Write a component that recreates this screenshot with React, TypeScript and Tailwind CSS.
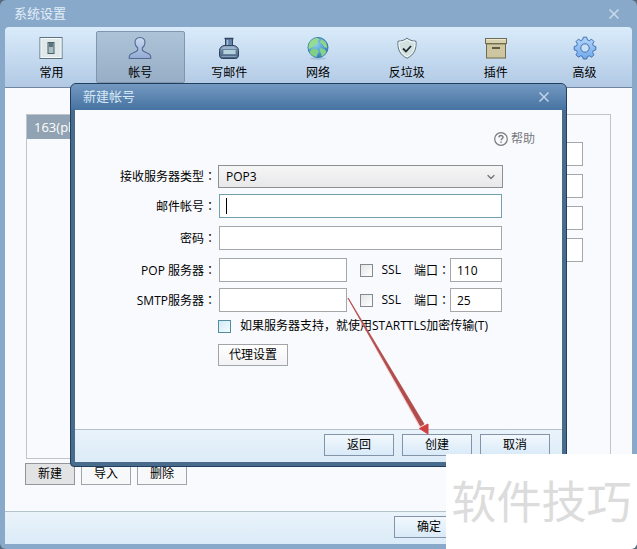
import React from 'react';
import { ChevronDown, X } from 'lucide-react';

const FONT = "font-['Open_Sans','Noto_Sans_CJK_SC',sans-serif]";

function GeneralIcon() {
  return (
    <svg width="24" height="24" viewBox="0 0 24 24" fill="none">
      <rect x="1" y="1.5" width="22" height="21" fill="#dfe9e9" stroke="#5d7180" />
      <rect x="2" y="2.5" width="20" height="19" stroke="#f6fafa" />
      <rect x="9" y="6.5" width="6" height="11" fill="#a9bfc4" stroke="#4b5f69" />
      <rect x="10" y="7" width="4" height="4" fill="#5d727c" />
    </svg>
  );
}

function AccountIcon() {
  return (
    <svg width="24" height="24" viewBox="0 0 24 24" fill="none">
      <defs>
        <linearGradient id="person" x1="0" y1="0" x2="0" y2="1">
          <stop offset="0" stopColor="#c9d9f3" />
          <stop offset="1" stopColor="#92abd4" />
        </linearGradient>
      </defs>
      <path
        d="M12 1.5c-3.200 0-5 2-5 4.800 0 2.600 1.200 4.400 2.700 5.700v2c-.4 1-1.800 1.800-3.600 2.400-3.100 1-4.800 2.200-4.800 4.200v1.900h21.400v-1.900c0-2-1.700-3.200-4.800-4.200-1.800-.6-3.200-1.400-3.600-2.400v-2c1.500-1.300 2.700-3.100 2.700-5.700 0-2.800-1.800-4.800-5-4.800z"
        fill="url(#person)"
        stroke="#53698f"
        strokeWidth="1.1"
      />
    </svg>
  );
}

function ComposeIcon() {
  return (
    <svg width="24" height="24" viewBox="0 0 24 24" fill="none">
      <defs>
        <linearGradient id="ink" x1="0" y1="0" x2="0" y2="1">
          <stop offset="0" stopColor="#7e9bbb" />
          <stop offset="1" stopColor="#46617f" />
        </linearGradient>
      </defs>
      <path d="M7 9.500h10c2.500.5 4.500 2.500 4.500 5v4.500c0 2-1 3.500-2.800 3.500H5.300c-1.800 0-2.800-1.500-2.800-3.500v-4.500c0-2.500 2-4.500 4.500-5z" fill="url(#ink)" stroke="#30435c" />
      <rect x="8.500" y="2.500" width="7" height="7" fill="#6483a8" stroke="#33465f" />
      <path d="M7.500 2.500h9" stroke="#33465f" strokeWidth="1.500" />
      <path d="M10.500 4v5" stroke="#a4bdd8" strokeWidth="1.500" />
      <path d="M4 13.500c.5-1.500 1.800-2.500 3.500-3h9c1.700.5 3 1.500 3.500 3z" fill="#9bb5cf" />
      <rect x="6" y="13.500" width="13" height="5" fill="#b4d0da" stroke="#56738f" strokeWidth=".7" />
      <path d="M4.500 20.500h15" stroke="#7f9dbc" />
    </svg>
  );
}

function NetworkIcon() {
  return (
    <svg width="24" height="24" viewBox="0 0 24 24" fill="none">
      <defs>
        <radialGradient id="sea" cx=".4" cy=".35" r=".7">
          <stop offset="0" stopColor="#8ad0ec" />
          <stop offset="1" stopColor="#3277bd" />
        </radialGradient>
      </defs>
      <ellipse cx="12" cy="22.500" rx="8" ry="1.200" fill="#84a3c6" opacity=".5" />
      <circle cx="12" cy="11.500" r="10" fill="url(#sea)" stroke="#3b7ba8" />
      <path d="M4 6c2-2.500 4.500-4 7.500-4l2 1.500-2 1.500.5 2-3 1.500-1 2.500-2.500.500-2.500 2C2.200 11 2.600 8 4 6z" fill="#94dc8e" />
      <path d="M15 3l4 2.500c1.500 2 2.300 4.200 2 6.500l-3-1-1.500-3-2.500-1z" fill="#8ed68c" />
      <path d="M6 12.500l4.500.5 2.500 2.500-1.500 2.500-1 3C7 20.500 4.500 18.500 3.500 16z" fill="#7fcf86" />
      <path d="M14.500 12l3.500 1 2.500 2.500c-1 2.500-2.700 4-5 5l-.5-3-1.500-2.500z" fill="#84d18b" />
    </svg>
  );
}

function SpamIcon() {
  return (
    <svg width="24" height="24" viewBox="0 0 24 24" fill="none">
      <path d="M12 2c2 2 5 3 9 3.200.6 7.500-1.500 13.500-9 17-7.500-3.500-9.600-9.500-9-17C7 5 10 4 12 2z" fill="#d3e0e0" stroke="#5f7480" />
      <path d="M12 3.600c2 1.600 4.500 2.400 7.900 2.600.3 6.400-1.800 11.500-7.900 14.700C5.900 17.700 3.800 12.600 4.100 6.200 7.500 6 10 5.200 12 3.600z" stroke="#f6fbfb" />
      <path d="M8 12.500l3 3 5-5.500" stroke="#1f2b2f" strokeWidth="1.800" />
    </svg>
  );
}

function PluginIcon() {
  return (
    <svg width="24" height="24" viewBox="0 0 24 24" fill="none">
      <rect x="2.500" y="7.500" width="19" height="14.500" fill="#cdc6a1" stroke="#6f6a50" />
      <rect x="1.500" y="2.500" width="21" height="5" fill="#d8d1ad" stroke="#6f6a50" />
      <path d="M2 3.500h20" stroke="#ece7cd" />
      <path d="M3 8.500h18" stroke="#a9a27e" />
      <path d="M8 12h8" stroke="#3b3829" strokeWidth="1.500" />
    </svg>
  );
}

function AdvancedIcon() {
  return (
    <svg width="24" height="24" viewBox="0 0 24 24" fill="none">
      <defs>
        <linearGradient id="gear" x1="0" y1="0" x2="0" y2="1">
          <stop offset="0" stopColor="#b2d5fa" />
          <stop offset="1" stopColor="#6fa9ec" />
        </linearGradient>
      </defs>
      <path
        d="M10.300 1.200h3.400l.7 2.600 1.900.8 2.300-1.400 2.400 2.400-1.400 2.300.8 1.900 2.400.7v3.400l-2.400.7-.8 1.900 1.400 2.300-2.400 2.400-2.300-1.400-1.900.8-.7 2.400h-3.400l-.7-2.400-1.900-.8-2.300 1.400L3 18.800l1.400-2.300-.8-1.900-2.400-.7v-3.400l2.400-.7.8-1.900L3 5.600l2.400-2.400 2.300 1.400 1.900-.8z"
        fill="url(#gear)"
        stroke="#426fae"
        strokeLinejoin="round"
      />
      <circle cx="12" cy="12" r="4.200" fill="#c9dff4" stroke="#426fae" />
    </svg>
  );
}

const tabs = [
  { label: '常用', icon: GeneralIcon },
  { label: '帐号', icon: AccountIcon, active: true },
  { label: '写邮件', icon: ComposeIcon },
  { label: '网络', icon: NetworkIcon },
  { label: '反垃圾', icon: SpamIcon },
  { label: '插件', icon: PluginIcon },
  { label: '高级', icon: AdvancedIcon },
];

const inputClass = 'h-6 min-w-0 border border-[#a5a7ab] bg-white px-1.5 text-xs text-black outline-none';
const checkClass = 'size-[13px] shrink-0 appearance-none border bg-linear-to-br';

function Colon() {
  return <span className="font-['Noto_Sans_CJK_TC',sans-serif]">：</span>;
}

function ActionButton({ children }: { children: React.ReactNode }) {
  return (
    <button
      type="button"
      className="flex h-[22px] w-[70px] items-center justify-center border border-[#8494a8] bg-linear-to-b from-[#f2f8fd] to-[#d9eaf8]"
    >
      {children}
    </button>
  );
}

function Row({ id, label, children }: { id: string; label: string; children: React.ReactNode }) {
  return (
    <div className="flex items-center gap-0.5">
      <label htmlFor={id} className="w-[141px] shrink-0 text-right">
        {label}
        <Colon />
      </label>
      <div className="flex min-w-0 flex-1 items-center">{children}</div>
    </div>
  );
}

function ServerRow({ name, label, port }: { name: string; label: string; port: string }) {
  return (
    <Row id={name} label={label}>
      <input id={name} type="text" className={`${inputClass} ml-px flex-1`} />
      <label className="ml-[13px] flex items-center gap-[9px]">
        <input type="checkbox" className={`${checkClass} border-[#85888c] from-[#e4e5e7] to-white`} />
        SSL
      </label>
      <label htmlFor={`${name}-port`} className="ml-[13px]">
        端口
        <Colon />
      </label>
      <input id={`${name}-port`} type="text" defaultValue={port} className={`${inputClass} mr-px w-[52px]`} />
    </Row>
  );
}

function AccountDialog() {
  return (
    <section
      role="dialog"
      aria-labelledby="dialog-title"
      className="absolute inset-x-[70px] top-[83px] rounded-t-md rounded-b border border-[#213f5e] bg-[#4a6c8c]"
    >
      <header className="flex h-[26px] items-center justify-between rounded-t-[5px] bg-linear-to-b from-[#7499c1] to-[#4673a1] pr-[14px] pl-3">
        <h2 id="dialog-title" className="text-[13px] text-[#d5e8f6]">新建帐号</h2>
        <button type="button" aria-label="关闭" className="text-[#bfd3e8]">
          <X size={16} strokeWidth={2.500} />
        </button>
      </header>

      <div className="mx-1 mb-1 bg-[#f9fafe]">
        <form className="pt-5 pr-[59px] pb-[63px]">
          <div className="-mr-8 flex h-[18px] justify-end">
            <a href="#help" className="flex items-center gap-[3px] text-[#77797d]">
              <svg width="14" height="14" viewBox="0 0 14 14" fill="none" stroke="currentColor">
                <circle cx="7" cy="7" r="6.300" strokeWidth="1.200" />
                <path d="M5 5.400C5.100 3 9 3 9 5.300c0 1.400-1.900 1.500-1.900 3" strokeWidth="1.500" />
                <path d="M7.100 9.400v1.400" strokeWidth="1.500" />
              </svg>
              帮助
            </a>
          </div>

          <div className="mt-[17px] flex flex-col gap-1.5">
            <Row id="protocol" label="接收服务器类型">
              <div className="relative flex-1">
                <select
                  id="protocol"
                  className="block h-[23px] w-full appearance-none border border-[#8d8f92] bg-linear-to-b from-[#f6f6f7] to-[#e8e8ea] pl-[7px] outline-none"
                >
                  <option>POP3</option>
                </select>
                <ChevronDown size={12} strokeWidth={2.500} className="pointer-events-none absolute top-[6px] right-[6px] text-[#717477]" />
              </div>
            </Row>
            <div className="flex flex-col gap-2">
              <Row id="email" label="邮件帐号">
                <div className="relative mx-px flex-1">
                  <input id="email" type="text" className="block h-6 w-full border border-[#72a1ad] bg-white px-1.5 outline-none" />
                  <span className="pointer-events-none absolute top-1 left-[7px] h-4 w-px bg-black" />
                </div>
              </Row>
              <Row id="password" label="密码">
                <input id="password" type="password" className={`${inputClass} mx-px flex-1`} />
              </Row>
              <ServerRow name="pop" label="POP 服务器" port="110" />
            </div>
            <ServerRow name="smtp" label="SMTP服务器" port="25" />
          </div>

          <div className="mt-[5px] ml-[143px] flex flex-col items-start gap-[9px]">
            <label className="flex h-[18px] items-center gap-[9px] whitespace-nowrap">
              <input type="checkbox" className={`${checkClass} border-[#528d9f] from-[#d0eaf4] to-[#f4fcff]`} />
              如果服务器支持，就使用STARTTLS加密传输(T)
            </label>
            <button type="button" className="flex h-[22px] w-[70px] items-center justify-center border border-[#a2a4a7] bg-linear-to-b from-white to-[#f3f3f5]">
              代理设置
            </button>
          </div>
        </form>

        <footer className="flex h-[33px] items-start justify-end gap-2 border-t border-[#b4c2ce] bg-linear-to-b from-[#eaf3fa] to-[#dbebf8] pt-1 pr-3">
          <ActionButton>返回</ActionButton>
          <ActionButton>创建</ActionButton>
          <ActionButton>取消</ActionButton>
        </footer>
      </div>
    </section>
  );
}

export default function App() {
  return (
    <div className="bg-[#596b7a]">
      <main className={`relative flex min-h-screen flex-col overflow-hidden rounded-md bg-[#89a9cb] px-[5px] pb-[5px] text-xs text-black ${FONT}`}>
        <header className="flex h-[27px] items-center justify-between pr-[10px] pl-[9px]">
          <h1 className="text-[13px] text-[#e2eef8]">系统设置</h1>
          <button type="button" aria-label="关闭" className="text-[#c9daea]">
            <X size={16} strokeWidth={2.500} />
          </button>
        </header>

        <nav className="flex h-[61px] rounded-t-sm border-b border-[#71869c] bg-linear-to-b from-[#daecfb] to-[#b1c9e4] py-1 pr-[3px] pl-[2px]">
          {tabs.map(({ label, icon: Icon, active }) => (
            <button
              key={label}
              type="button"
              className={`flex flex-1 flex-col items-center gap-1 rounded-xs border pt-1 ${
                active ? 'border-[#8196ac] bg-linear-to-b from-[#adc3d8] to-[#98aec6]' : 'border-transparent'
              }`}
            >
              <Icon />
              <span className="leading-[18px]">{label}</span>
            </button>
          ))}
        </nav>

        <div className="flex flex-1 flex-col gap-1 bg-[#f9fafe] px-[21px] pt-[26px] pb-[26px]">
          <div className="flex flex-1 gap-3">
            <ul className="w-1/4 border border-[#bfc4ca]">
              <li className="h-6 bg-[#91a3b2] px-[7px] text-[13px] leading-6 text-white">163(pl</li>
            </ul>
            <div className="flex flex-1 flex-col gap-2 border border-[#bfc4ca] pt-[27px] pr-[27px] pl-24">
              <input type="text" aria-label="名称" className={inputClass} />
              <input type="text" aria-label="邮箱" className={inputClass} />
              <input type="text" aria-label="发信名称" className={inputClass} />
              <input type="text" aria-label="回复地址" className={inputClass} />
            </div>
          </div>
          <div className="-ml-px flex gap-1.5">
            <button type="button" className="h-[22px] w-[50px] border border-[#929599] bg-[#e2e3e5]">新建</button>
            <button type="button" className="h-[22px] w-[50px] border border-[#a2a4a7] bg-[#f7f8fa]">导入</button>
            <button type="button" className="h-[22px] w-[50px] border border-[#a2a4a7] bg-[#f7f8fa]">删除</button>
          </div>
        </div>

        <footer className="flex h-[33px] items-start justify-end border-t border-[#b4c2ce] bg-linear-to-b from-[#eaf3fa] to-[#dbebf8] pt-1 pr-[168px]">
          <ActionButton>确定</ActionButton>
        </footer>

        <AccountDialog />

        {/* pointer from the SMTP field to the create button */}
        <svg
          className="pointer-events-none absolute top-[294px] left-[344px]"
          width="90"
          height="144"
          viewBox="0 0 90 144"
          fill="none"
        >
          <path d="M4 4L76 133L80 131Z" fill="#f6b4b4" stroke="#f6c0c0" strokeWidth="1.500" opacity=".6" />
          <path d="M4 4L76.500 132L80 130Z" fill="#b14c4c" stroke="#b14c4c" strokeWidth=".8" />
          <path d="M75.500 134.500L84 130L84 140Z" fill="#d04040" stroke="#d04040" />
        </svg>

        <div className="absolute right-0 bottom-0 flex h-[95px] w-[191px] items-center justify-center bg-white text-[45px] leading-none font-normal text-[#dcdcdc]">
          软件技巧
        </div>
      </main>
    </div>
  );
}
